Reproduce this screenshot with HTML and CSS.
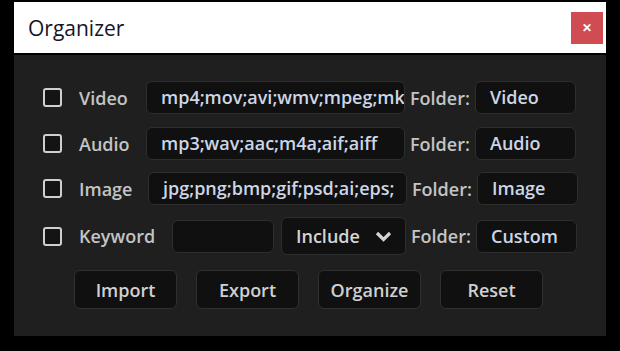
FILE: index.html
```html
<!DOCTYPE html>
<html lang="en">
<head>
    <meta charset="UTF-8"/>
    <title>Organizer</title>
    <link rel="stylesheet" href="styles.css">
</head>
<body>
<div class="window">
    <div class="titlebar">
        <span class="title">Organizer</span>
        <button class="close" type="button">&#x2715;</button>
    </div>
    <div class="panel">
        <div class="row">
            <span class="check"></span>
            <span class="label">Video</span>
            <span class="field ext">mp4;mov;avi;wmv;mpeg;mkv</span>
            <span class="folder-label">Folder:</span>
            <span class="field folder">Video</span>
        </div>
        <div class="row">
            <span class="check"></span>
            <span class="label">Audio</span>
            <span class="field ext">mp3;wav;aac;m4a;aif;aiff</span>
            <span class="folder-label">Folder:</span>
            <span class="field folder">Audio</span>
        </div>
        <div class="row row-image">
            <span class="check"></span>
            <span class="label">Image</span>
            <span class="field ext">jpg;png;bmp;gif;psd;ai;eps;</span>
            <span class="folder-label">Folder:</span>
            <span class="field folder">Image</span>
        </div>
        <div class="row row-keyword">
            <span class="check"></span>
            <span class="label">Keyword</span>
            <span class="field keyword"></span>
            <span class="select">Include
                <svg width="17" height="11" viewBox="0 0 17 11"><path d="M2 2 L8.5 8.5 L15 2" fill="none" stroke="#d4d4d4" stroke-width="3.2"/></svg>
            </span>
            <span class="folder-label">Folder:</span>
            <span class="field folder">Custom</span>
        </div>
        <div class="buttons">
            <button type="button">Import</button>
            <button type="button">Export</button>
            <button type="button">Organize</button>
            <button type="button">Reset</button>
        </div>
    </div>
</div>
</body>
</html>
```

FILE: styles.css
```css
body {
    margin: 0;
    background-color: #000;
    font-family: "Open Sans", "Noto Sans", sans-serif;
}

.window {
    width: 592px;
    margin: 2px 0 0 14px;
}

.titlebar {
    height: 51px;
    background-color: #fff;
    display: flex;
    align-items: center;
    justify-content: space-between;
    padding: 0 3px 0 14px;
    margin-bottom: 2px;
}

.title {
    font-size: 21px;
    color: #15152a;
}

.close {
    width: 32px;
    height: 32px;
    border: none;
    background-color: #cf4d52;
    color: #fff;
    font-size: 12px;
    font-weight: bold;
    padding: 0;
}

.panel {
    background-color: #1f1f1f;
    height: 281px;
    box-sizing: border-box;
    padding: 26px 0 0 29px;
}

.row {
    display: flex;
    align-items: center;
    height: 33px;
    margin-bottom: 12px;
    font-size: 18px;
    font-weight: 600;
}

.row:first-child {
    margin-bottom: 13px;
}

.check {
    width: 15px;
    height: 15px;
    border: 2px solid #cfcfcf;
    border-radius: 3px;
    background-color: #141414;
    margin-right: 17px;
}

.label {
    width: 67px;
    color: #c4c4c4;
}

.field {
    height: 31px;
    background-color: #101010;
    border: 1px solid #2e2e2e;
    border-radius: 6px;
    color: #cdd6e6;
    line-height: 31px;
    padding: 0 0 0 14px;
    overflow: hidden;
    white-space: nowrap;
}

.ext {
    width: 243px;
}

.folder {
    width: 85px;
}

.folder-label {
    width: 60px;
    margin: 0 5px;
    color: #c4c4c4;
    white-space: nowrap;
}

.row-image .label {
    width: 69px;
}

.row-keyword {
    height: 38px;
}

.row-keyword .label {
    width: 93px;
}

.keyword {
    width: 100px;
    padding: 0;
}

.select {
    width: 125px;
    height: 38px;
    margin-left: 7px;
    background-color: #101010;
    border: 1px solid #2e2e2e;
    border-radius: 6px;
    color: #d4d4d4;
    display: flex;
    align-items: center;
    justify-content: space-between;
    padding: 0 13px 0 14px;
    box-sizing: border-box;
}

.buttons {
    display: flex;
    gap: 19px;
    margin: 15px 0 0 31px;
}

.buttons button {
    width: 103px;
    height: 39px;
    background-color: #101010;
    border: 1px solid #303030;
    border-radius: 6px;
    color: #d0d0d0;
    font-family: "Open Sans", "Noto Sans", sans-serif;
    font-size: 18px;
    font-weight: 600;
    padding: 0;
}
```
